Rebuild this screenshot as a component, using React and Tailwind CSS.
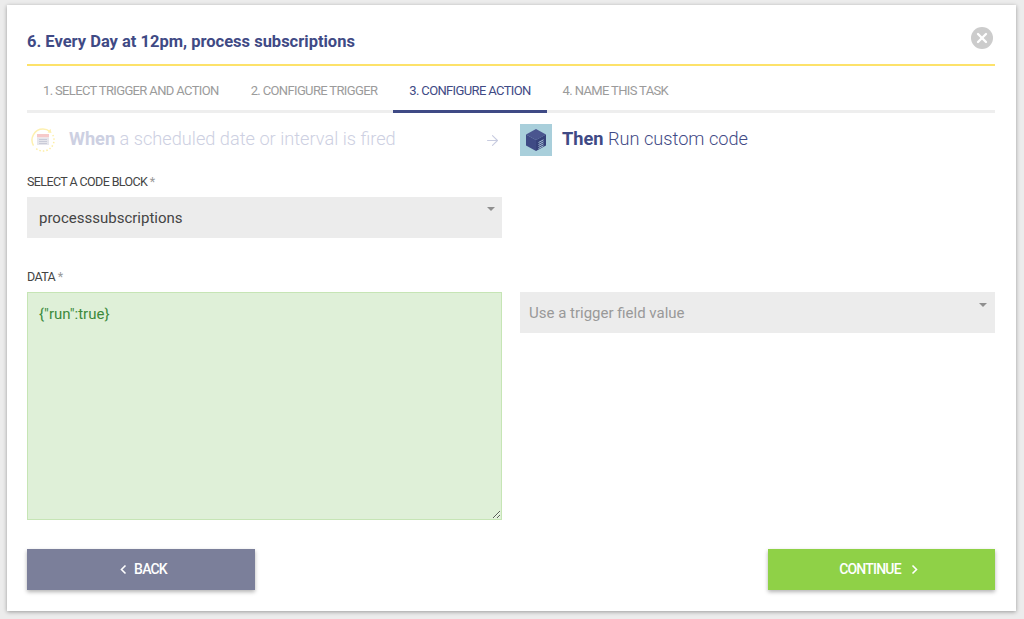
import { X, ArrowRight } from "lucide-react";

function Tab({ label, active }) {
  return (
    <div className={`px-[16px] h-[47px] pt-[16px] text-[13px] tracking-[-0.64px] leading-[17px] -mb-[3px] border-b-[3px] ${active ? "text-[#3f4a85] border-[#3f4a85]" : "text-[#9b9b9b] border-transparent"}`}>
      {label}
    </div>
  );
}

function Caret() {
  return <div className="w-0 h-0 border-l-[4px] border-r-[4px] border-t-[4px] border-l-transparent border-r-transparent border-t-[#8f8f8f]" />;
}

function Chevron({ d }) {
  return (
    <svg width="7" height="11" viewBox="0 0 7 11" fill="none" stroke="currentColor" strokeWidth="1.6">
      <path d={d} />
    </svg>
  );
}

function CalendarIcon() {
  return (
    <svg width="26" height="26" viewBox="0 0 26 26">
      <path d="M3.5 18.5 A11 11 0 0 1 13 2 A11 11 0 0 1 20 4.6" fill="none" stroke="#fdf0b0" strokeWidth="1.5" />
      <path d="M22.8 8 A11 11 0 0 1 6 21.5" fill="none" stroke="#fdeea5" strokeWidth="1.5" strokeDasharray="1.5 2" />
      <path d="M20.5 1.8 L21.5 6 L17.5 5.5 Z" fill="#fdf0b0" />
      <rect x="7" y="7" width="12" height="3.5" fill="#f6c9c9" />
      <rect x="7" y="10.5" width="12" height="7.5" fill="#e6e6ec" />
      <path d="M9 12.5h8M9 14.5h8M9 16.5h8" stroke="#c5c7d6" strokeWidth="0.9" />
    </svg>
  );
}

function CubeIcon() {
  return (
    <div className="w-[32px] h-[32px] bg-[#a9cfdb] flex items-center justify-center">
      <svg width="22" height="24" viewBox="0 0 22 24">
        <path d="M11 1 L21 6.5 L11 12 L1 6.5 Z" fill="#4a558f" />
        <path d="M1 6.5 L11 12 V23 L1 17.5 Z" fill="#3f4a85" />
        <path d="M21 6.5 L11 12 V23 L21 17.5 Z" fill="#36417a" />
        <path d="M13.5 14.5l5-2.7M13.5 16.5l5-2.7M13.5 18.5l5-2.7M13.5 20.5l5-2.7" stroke="#a9c4d6" strokeWidth="1" />
      </svg>
    </div>
  );
}

export default function App() {
  return (
    <div className="w-[1024px] h-[619px] bg-[#ececec] pt-[5px] pl-[7px] overflow-hidden font-['Roboto',sans-serif]">
      <div className="w-[1009px] h-[606px] bg-white shadow-[0_1px_4px_rgba(0,0,0,0.35)] pl-[20px] pr-[21px] flex flex-col">
        <div className="h-[61px] border-b-2 border-[#fde26a] flex items-start justify-between shrink-0">
          <h1 className="mt-[27px] text-[16.5px] leading-[20px] font-bold text-[#3f4a85]">6. Every Day at 12pm, process subscriptions</h1>
          <div className="mt-[22px] mr-[2px] w-[22px] h-[22px] rounded-full bg-[#cccccc] flex items-center justify-center">
            <X size={16} strokeWidth={3.5} className="text-white" />
          </div>
        </div>

        <div className="h-[47px] flex border-b-[3px] border-[#eeeeee] shrink-0">
          <Tab label="1. SELECT TRIGGER AND ACTION" />
          <Tab label="2. CONFIGURE TRIGGER" />
          <Tab label="3. CONFIGURE ACTION" active />
          <Tab label="4. NAME THIS TASK" />
        </div>

        <div className="h-[54px] flex items-center shrink-0">
          <div className="flex items-center w-[475px] pl-[3px]">
            <CalendarIcon />
            <span className="ml-[13px] -mt-[2px] text-[18.2px] font-light text-[#cdd0e2]"><b className="font-bold">When</b> a scheduled date or interval is fired</span>
            <ArrowRight size={17} strokeWidth={1.5} className="text-[#c8cce0] ml-auto mr-[1px]" />
          </div>
          <div className="ml-[18px]"><CubeIcon /></div>
          <span className="ml-[10px] -mt-[2px] text-[18.2px] font-light text-[#3f4a85]"><b className="font-bold">Then</b> Run custom code</span>
        </div>

        <label className="block mt-[7px] text-[12.5px] tracking-[-0.6px] leading-[16px] text-[#444444]">SELECT A CODE BLOCK <span className="text-[#999999]">*</span></label>
        <div className="mt-[7px] w-[475px] h-[41px] bg-[#ececec] flex items-start justify-between pl-[12px] pr-[7px] shrink-0">
          <span className="mt-[11px] text-[15px] leading-[20px] text-[#444444]">processsubscriptions</span>
          <div className="mt-[10px]"><Caret /></div>
        </div>

        <label className="block mt-[31px] text-[12.5px] tracking-[-0.6px] leading-[16px] text-[#444444]">DATA <span className="text-[#999999]">*</span></label>

        <div className="mt-[7px] flex gap-[18px] items-start shrink-0">
          <textarea
            readOnly
            defaultValue={'{"run":true}'}
            className="w-[475px] h-[228px] block bg-[#dff0d8] border border-[#c6e5b5] px-[11px] py-[11px] text-[15px] leading-[20px] text-[#3c8a3c] outline-none resize-y font-['Roboto',sans-serif]"
          />
          <div className="w-[475px] h-[41px] bg-[#ececec] flex items-start justify-between pl-[9px] pr-[8px]">
            <span className="mt-[11px] text-[15px] leading-[20px] text-[#999999]">Use a trigger field value</span>
            <div className="mt-[11px]"><Caret /></div>
          </div>
        </div>

        <div className="mt-[29px] flex justify-between">
          <button className="w-[228px] h-[41px] pl-[5px] bg-[#7b7f9a] text-white text-[14px] tracking-[-0.8px] font-medium shadow-[0_2px_4px_rgba(0,0,0,0.3)] flex items-center justify-center gap-[7px]">
            <Chevron d="M5.5 1.5 L1.5 5.5 L5.5 9.5" /><span>BACK</span>
          </button>
          <button className="w-[227px] h-[41px] pr-[6px] bg-[#8fd147] text-white text-[14px] tracking-[-0.8px] font-medium shadow-[0_2px_4px_rgba(0,0,0,0.3)] flex items-center justify-center gap-[10px]">
            <span>CONTINUE</span><Chevron d="M1.5 1.5 L5.5 5.5 L1.5 9.5" />
          </button>
        </div>
      </div>
    </div>
  );
}
